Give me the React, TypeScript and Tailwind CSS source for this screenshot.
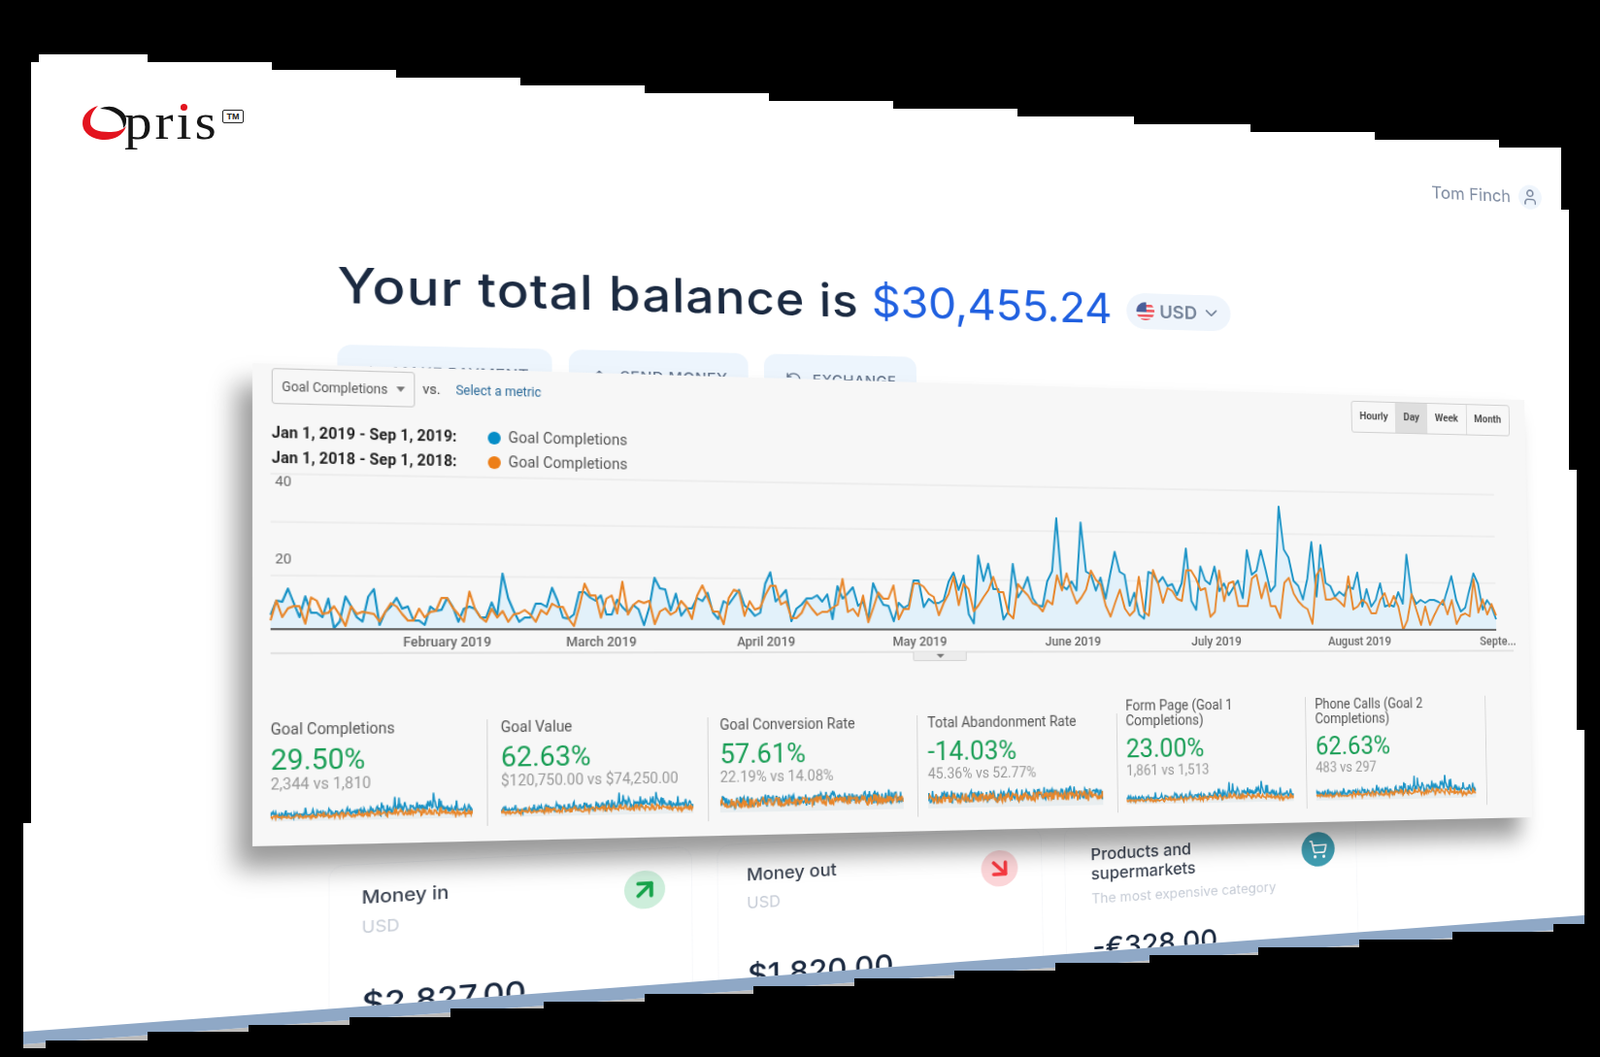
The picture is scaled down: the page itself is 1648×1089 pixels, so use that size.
import { ArrowDown, ArrowDownRight, ArrowUp, ArrowUpRight, ChevronDown, RefreshCcw, ShoppingCart, User } from "lucide-react";

type Point = [number, number];

// maps a w x h box on to four screen corners (tl, tr, br, bl)
function quadMatrix(w: number, h: number, [p0, p1, p2, p3]: Point[]) {
  const dx1 = p1[0] - p2[0];
  const dx2 = p3[0] - p2[0];
  const sx = p0[0] - p1[0] + p2[0] - p3[0];
  const dy1 = p1[1] - p2[1];
  const dy2 = p3[1] - p2[1];
  const sy = p0[1] - p1[1] + p2[1] - p3[1];
  const det = dx1 * dy2 - dx2 * dy1;
  const g = (sx * dy2 - dx2 * sy) / det;
  const k = (dx1 * sy - sx * dy1) / det;
  const a = p1[0] - p0[0] + g * p1[0];
  const b = p3[0] - p0[0] + k * p3[0];
  const d = p1[1] - p0[1] + g * p1[1];
  const e = p3[1] - p0[1] + k * p3[1];
  return `matrix3d(${a / w},${d / w},0,${g / w},${b / h},${e / h},0,${k / h},0,0,1,0,${p0[0]},${p0[1]},0,1)`;
}

const pageTransform = quadMatrix(1700, 1000, [[32, 56], [1608, 152], [1632, 943], [24, 1063]]);
const cardTransform = quadMatrix(1300, 440, [[260, 374], [1570, 412], [1578, 842], [260, 872]]);

const blue = [
  13, 26, 25, 37, 24, 11, 30, 15, 15, 11, 28, 1, 7, 30, 21, 11, 7, 30, 37, 4, 16, 21, 29, 19, 21, 8, 8, 4, 21, 17, 18, 29, 21, 7, 19, 21, 19, 11, 11,
  25, 13, 52, 29, 17, 7, 11, 11, 24, 24, 21, 39, 27, 11, 10, 14, 35, 35, 30, 27, 32, 14, 14, 28, 21, 16, 23, 19, 4, 21, 49, 39, 38, 18, 34, 13, 20,
  20, 30, 27, 35, 16, 10, 27, 24, 31, 38, 23, 19, 13, 16, 44, 55, 27, 32, 38, 8, 20, 24, 30, 30, 33, 27, 34, 10, 42, 30, 35, 41, 23, 27, 10, 45, 33,
  24, 23, 8, 26, 21, 24, 48, 48, 22, 30, 26, 26, 29, 47, 56, 39, 53, 15, 6, 73, 48, 65, 40, 40, 10, 18, 65, 32, 40, 52, 31, 24, 23, 48, 58, 111, 44,
  40, 48, 39, 107, 58, 55, 39, 52, 31, 55, 78, 58, 55, 24, 37, 15, 11, 58, 56, 47, 53, 44, 46, 35, 47, 82, 29, 20, 64, 50, 46, 64, 39, 47, 35, 43, 50,
  32, 81, 56, 60, 81, 61, 39, 45, 126, 82, 74, 50, 45, 31, 52, 90, 34, 87, 48, 45, 34, 39, 35, 45, 42, 59, 24, 42, 24, 31, 48, 24, 26, 24, 39, 27, 78,
  37, 27, 31, 28, 31, 31, 29, 26, 41, 56, 31, 19, 23, 41, 59, 48, 21, 31, 24, 11,
];

const orange = [
  8, 26, 11, 19, 21, 21, 5, 29, 26, 14, 15, 21, 13, 3, 21, 14, 16, 15, 14, 7, 16, 24, 21, 14, 8, 8, 19, 11, 16, 17, 29, 29, 20, 14, 7, 35, 19, 11, 7,
  19, 11, 17, 7, 14, 15, 18, 14, 7, 18, 14, 24, 21, 21, 10, 3, 21, 43, 32, 32, 11, 29, 32, 15, 45, 14, 23, 27, 25, 27, 5, 17, 20, 14, 17, 27, 21, 10,
  32, 42, 30, 17, 17, 5, 30, 38, 36, 13, 27, 19, 21, 33, 42, 42, 24, 27, 11, 11, 16, 27, 20, 14, 17, 17, 21, 24, 49, 17, 20, 13, 33, 7, 21, 36, 30, 30,
  43, 10, 20, 20, 45, 45, 42, 35, 32, 14, 26, 35, 52, 24, 45, 40, 18, 24, 32, 39, 52, 37, 37, 16, 11, 45, 39, 34, 26, 24, 18, 29, 25, 54, 39, 56, 39,
  26, 32, 40, 59, 50, 45, 24, 13, 27, 40, 21, 14, 19, 53, 18, 14, 60, 47, 27, 42, 39, 31, 29, 60, 60, 52, 40, 42, 13, 18, 60, 29, 47, 49, 24, 24, 24,
  52, 56, 32, 48, 24, 24, 12, 48, 53, 37, 29, 24, 21, 6, 56, 63, 31, 31, 33, 29, 24, 55, 21, 24, 31, 27, 17, 17, 31, 38, 24, 35, 24, 0, 10, 37, 21, 5,
  24, 5, 15, 24, 31, 16, 31, 6, 15, 17, 14, 53, 18, 32, 16, 27, 15,
];

const plotLeft = 16;
const plotWidth = 1246;
const axisY = 145;

function linePoints(series: number[]) {
  return series
    .map((v, i) => `${(plotLeft + (i * plotWidth) / (series.length - 1)).toFixed(1)},${axisY - v}`)
    .join(" ");
}

function rand(i: number, seed: number) {
  const n = Math.sin(i * 12.9898 + seed * 78.233) * 43758.5453;
  return n - Math.floor(n);
}

function sparkPoints(series: number[], scale: number, base: number, jitter: number, seed: number) {
  return series
    .map((v, i) => {
      const y = base - v * scale - jitter * (rand(i, seed) - 0.5);
      return `${((i * 182) / (series.length - 1)).toFixed(1)},${y.toFixed(1)}`;
    })
    .join(" ");
}

const monthLabels = [
  { label: "February 2019", day: 31 },
  { label: "March 2019", day: 59 },
  { label: "April 2019", day: 90 },
  { label: "May 2019", day: 120 },
  { label: "June 2019", day: 151 },
  { label: "July 2019", day: 181 },
  { label: "August 2019", day: 212 },
  { label: "Septe...", day: 243 },
];

const metrics = [
  { title: "Goal Completions", value: "29.50%", sub: "2,344 vs 1,810", box: "w-[208px] pl-[12px]", scale: 0.16, base: 21, jitter: 2, seed: 1 },
  { title: "Goal Value", value: "62.63%", sub: "$120,750.00 vs $74,250.00", box: "w-[209px] pl-[12px]", scale: 0.14, base: 20, jitter: 4, seed: 2 },
  { title: "Goal Conversion Rate", value: "57.61%", sub: "22.19% vs 14.08%", box: "w-[208px] pl-[11px]", scale: 0.06, base: 15, jitter: 11, seed: 3 },
  { title: "Total Abandonment Rate", value: "-14.03%", sub: "45.36% vs 52.77%", box: "w-[208px] pl-[10px]", scale: 0.04, base: 14, jitter: 12, seed: 4 },
  { title: "Form Page (Goal 1 Completions)", value: "23.00%", sub: "1,861 vs 1,513", box: "w-[206px] pl-[9px]", scale: 0.15, base: 21, jitter: 2, seed: 5 },
  { title: "Phone Calls (Goal 2 Completions)", value: "62.63%", sub: "483 vs 297", box: "w-[205px] pl-[10px]", scale: 0.17, base: 20, jitter: 3, seed: 6 },
];

function Logo() {
  return (
    <div className="absolute left-[83px] top-[106px] h-[56px] w-[172px]">
      <svg width="50" height="42" viewBox="0 0 50 42" className="absolute left-0 top-0">
        <path d="M18 3C8 6 2 13 2 21C2 31 12 38 25 38C35 38 44 33 47 24C42 29 36 30 29 30C18 30 10 27 10 20C10 12 14 7 18 3Z" fill="#e3141f" />
        <path d="M20 6C26 3 33 3 38 6C44 9 48 14 47 19C47 22 46 24 44 26C44 20 42 15 38 12C33 8 27 6 20 6Z" fill="#141414" />
      </svg>
      <span className="absolute left-[45px] top-[-12px] origin-left scale-x-[1.1] text-[52px] leading-[64px] tracking-[2.7px] text-[#161616] [font-family:'Liberation_Serif',serif]">
        pris
      </span>
      <span className="absolute left-[103px] top-[1px] h-[7px] w-[7px] rounded-full bg-[#e3141f]" />
      <span className="absolute left-[146px] top-[7px] flex h-[14px] w-[22px] items-center justify-center rounded-[2px] border-[1.5px] border-[#222] text-[9px] font-bold leading-none text-[#222] [font-family:'Liberation_Sans',sans-serif]">
        TM
      </span>
    </div>
  );
}

function UsFlag() {
  return (
    <svg width="22" height="22" viewBox="0 0 22 22">
      <clipPath id="flag-clip">
        <circle cx="11" cy="11" r="11" />
      </clipPath>
      <g clipPath="url(#flag-clip)">
        <rect width="22" height="22" fill="#f3f4f6" />
        <rect y="3" width="22" height="3" fill="#ef5a63" />
        <rect y="9" width="22" height="3" fill="#ef5a63" />
        <rect y="15" width="22" height="3" fill="#ef5a63" />
        <rect y="20" width="22" height="2" fill="#ef5a63" />
        <rect width="12" height="12" fill="#4a5f9a" />
      </g>
    </svg>
  );
}

function ActionButton({ label, icon, className }: { label: string; icon: React.ReactNode; className: string }) {
  return (
    <div className={`flex h-[58px] items-center justify-center gap-[12px] rounded-[14px] bg-[#edf5fd] text-[16px] font-medium uppercase tracking-[0.5px] text-[#64748b] ${className}`}>
      {icon}
      {label}
    </div>
  );
}

function SummaryCard({ icon, circle, children }: { icon: React.ReactNode; circle: string; children: React.ReactNode }) {
  return (
    <div className="flex h-[300px] w-[358px] items-start justify-between rounded-[14px] border border-[#f7f8fa] pl-[30px] pr-[27px] pt-[23px]">
      <div>{children}</div>
      <div className={`flex h-[42px] w-[42px] shrink-0 items-center justify-center rounded-full ${circle}`}>{icon}</div>
    </div>
  );
}

function PageContent() {
  return (
    <div
      className="absolute left-0 top-0 h-[1000px] w-[1700px] origin-top-left overflow-hidden blur-[0.6px] [font-family:Inter,sans-serif]"
      style={{ transform: pageTransform }}
    >
      <div className="flex items-center justify-end gap-[11px] pr-[30px] pt-[52px]">
        <span className="text-[22px] leading-[32px] text-[#7d8aa0]">Tom Finch</span>
        <div className="flex h-[32px] w-[32px] items-center justify-center rounded-full bg-[#eff5fc]">
          <User size={24} color="#7d8aa0" strokeWidth={2} />
        </div>
      </div>

      <div className="ml-[280px] mt-[117px] flex items-center leading-[60px] text-[#1b2a41]">
        <span className="text-[53px] font-medium tracking-[1.1px]">Your total balance is</span>
        <span className="ml-[14px] text-[51px] tracking-[-0.3px] text-[#2060e0]">$30,455.24</span>
        <div className="ml-[18px] mt-[3px] flex h-[44px] w-[128px] items-center justify-center gap-[6px] rounded-full bg-[#eff5fc]">
          <UsFlag />
          <span className="text-[22px] font-semibold leading-none text-[#76859a]">USD</span>
          <ChevronDown size={24} color="#76859a" />
        </div>
      </div>

      <div className="ml-[280px] mt-[34px] flex gap-[17px]">
        <ActionButton className="w-[210px]" label="Make payment" icon={<ArrowDown size={18} />} />
        <ActionButton className="w-[187px]" label="Send money" icon={<ArrowUp size={18} />} />
        <ActionButton className="w-[168px]" label="Exchange" icon={<RefreshCcw size={18} />} />
      </div>

      <div className="ml-[272px] mt-[497px] flex gap-[26px] text-[19px] font-medium leading-[23px] text-[#3c4452]">
        <SummaryCard circle="bg-[#cdeedb]" icon={<ArrowUpRight size={32} color="#16a34a" strokeWidth={3} />}>
          <p>Money in</p>
          <p className="mt-[10px] text-[17px] font-normal leading-[20px] text-[#c6ccd6]">USD</p>
          <p className="mt-[50px] text-[33px] leading-[40px] text-[#1b2a41]">$2,827.00</p>
        </SummaryCard>
        <SummaryCard circle="bg-[#fbd5d8]" icon={<ArrowDownRight size={32} color="#f5383f" strokeWidth={3} />}>
          <p>Money out</p>
          <p className="mt-[10px] text-[17px] font-normal leading-[20px] text-[#c6ccd6]">USD</p>
          <p className="mt-[50px] text-[33px] leading-[40px] text-[#1b2a41]">$1,820.00</p>
        </SummaryCard>
        <SummaryCard circle="bg-[#3f9db1]" icon={<ShoppingCart size={24} color="#ffffff" />}>
          <p>
            Products and
            <br />
            supermarkets
          </p>
          <p className="mt-[7px] text-[16px] font-normal leading-[20px] text-[#c6ccd6]">The most expensive category</p>
          <p className="mt-[28px] text-[33px] leading-[40px] text-[#1b2a41]">-€328.00</p>
        </SummaryCard>
      </div>
    </div>
  );
}

function ChartCard() {
  return (
    <div
      className="absolute left-0 top-0 flex h-[440px] w-[1300px] origin-top-left flex-col bg-[#f7f7f7] shadow-[-14px_20px_22px_rgba(0,0,0,0.4)] blur-[0.4px] [font-family:Roboto,sans-serif]"
      style={{ transform: cardTransform }}
    >
      <div className="flex items-start pl-[17px] pr-[18px] pt-[4px]">
        <div className="flex h-[33px] w-[129px] items-center justify-between rounded-[3px] border border-[#c9c9c9] pl-[8px] pr-[8px] text-[12px] text-[#555]">
          Goal Completions
          <span className="h-0 w-0 border-x-[4px] border-t-[5px] border-x-transparent border-t-[#777]" />
        </div>
        <span className="ml-[7px] mt-[6px] text-[13px] text-[#444]">vs.</span>
        <span className="ml-[14px] mt-[7px] text-[12px] text-[#2b6a99]">Select a metric</span>
        <div className="ml-auto mt-[2px] flex h-[33px] w-[183px] rounded-[3px] border border-[#d0d0d0] text-[11px] font-semibold text-[#444]">
          <span className="flex w-[50px] items-center justify-center">Hourly</span>
          <span className="flex w-[37px] items-center justify-center bg-[#dedede]">Day</span>
          <span className="flex w-[46px] items-center justify-center border-r border-[#d8d8d8]">Week</span>
          <span className="flex w-[50px] items-center justify-center">Month</span>
        </div>
      </div>

      <div className="ml-[17px] mt-[13px] leading-[23px]">
        {["Jan 1, 2019 - Sep 1, 2019:", "Jan 1, 2018 - Sep 1, 2018:"].map((range, i) => (
          <div key={range} className="flex items-center">
            <span className="w-[196px] text-[14px] font-bold tracking-[0.1px] text-[#222]">{range}</span>
            <span className={`h-[12px] w-[12px] rounded-full ${i === 0 ? "bg-[#058dc7]" : "bg-[#ed7e17]"}`} />
            <span className="ml-[7px] text-[14px] tracking-[0.1px] text-[#555]">Goal Completions</span>
          </div>
        ))}
      </div>

      <div className="relative h-[170px]">
        <svg width="1300" height="170" viewBox="0 0 1300 170" className="absolute left-0 top-0">
          <path d="M16 3H1262M16 47H1262M16 96H1262" stroke="#e4e4e4" strokeWidth="1" />
          <polygon points={`${plotLeft},${axisY} ${linePoints(blue)} ${plotLeft + plotWidth},${axisY}`} fill="#e2f1fa" />
          <polyline points={linePoints(blue)} fill="none" stroke="#1a93c6" strokeWidth="2" strokeLinejoin="round" />
          <polyline points={linePoints(orange)} fill="none" stroke="#e8862a" strokeWidth="2" strokeLinejoin="round" />
          <path d="M16 145H1262" stroke="#666" strokeWidth="2" />
          <path d="M16 167H1282" stroke="#dcdcdc" strokeWidth="1.5" />
        </svg>
        <span className="absolute left-[20px] top-[2px] text-[13px] leading-[16px] text-[#666]">40</span>
        <span className="absolute left-[20px] top-[73px] text-[13px] leading-[16px] text-[#666]">20</span>
        {monthLabels.map((m) => (
          <span
            key={m.label}
            className="absolute top-[149px] -translate-x-1/2 whitespace-nowrap text-[12.5px] font-medium leading-[16px] text-[#666]"
            style={{ left: plotLeft + m.day * 5.135 }}
          >
            {m.label}
          </span>
        ))}
        <div className="absolute left-[625px] top-[167px] flex h-[9px] w-[55px] items-center justify-center rounded-b-[2px] border border-t-0 border-[#d4d4d4] bg-[#ececec]">
          <span className="h-0 w-0 border-x-[4px] border-t-[4px] border-x-transparent border-t-[#777]" />
        </div>
      </div>

      <div className="ml-[4px] mt-auto flex items-end pb-[14px]">
        {metrics.map((m) => (
          <div key={m.value + m.title} className={`flex flex-col border-r border-[#d6d6d6] pb-[8px] ${m.box}`}>
            <p className="w-[170px] text-[14px] leading-[15px] text-[#555]">{m.title}</p>
            <p className="mt-[6px] text-[26px] leading-[28px] text-[#1a9e56]">{m.value}</p>
            <p className="text-[14px] leading-[17px] text-[#999]">{m.sub}</p>
            <svg width="182" height="24" viewBox="0 0 182 24" className="mt-[1px]">
              <polygon points={`0,24 ${sparkPoints(blue, m.scale, m.base, m.jitter, m.seed)} 182,24`} fill="#e9eef0" />
              <polyline points={sparkPoints(blue, m.scale, m.base, m.jitter, m.seed)} fill="none" stroke="#1a93c6" strokeWidth="1.5" />
              <polyline points={sparkPoints(orange, m.scale * 0.7, m.base + 1, m.jitter * 0.8, m.seed + 10)} fill="none" stroke="#e8862a" strokeWidth="1.5" />
            </svg>
          </div>
        ))}
      </div>
    </div>
  );
}

export default function App() {
  return (
    <div className="relative h-[1089px] w-[1648px] overflow-hidden bg-black">
      <div className="absolute inset-0 bg-white [clip-path:polygon(40px_56px,152px_56px,152px_64px,280px_64px,280px_72px,408px_72px,408px_80px,536px_80px,536px_88px,664px_88px,664px_96px,792px_96px,792px_104px,920px_104px,920px_112px,1048px_112px,1048px_120px,1168px_120px,1168px_128px,1288px_128px,1288px_136px,1416px_136px,1416px_144px,1544px_144px,1544px_152px,1608px_152px,1608px_216px,1616px_216px,1616px_484px,1624px_484px,1624px_752px,1632px_752px,1632px_952px,1600px_952px,1600px_960px,1496px_960px,1496px_968px,1400px_968px,1400px_976px,1296px_976px,1296px_984px,1184px_984px,1184px_992px,1087px_992px,1087px_1000px,983px_1000px,983px_1008px,880px_1008px,880px_1016px,776px_1016px,776px_1024px,664px_1024px,664px_1032px,560px_1032px,560px_1039px,464px_1039px,464px_1048px,360px_1048px,360px_1056px,256px_1056px,256px_1063px,152px_1063px,152px_1072px,47px_1072px,47px_1080px,24px_1080px,24px_848px,32px_848px,32px_64px,40px_64px)]">
        <Logo />
        <PageContent />
        <div className="absolute inset-0 bg-[#bdbcbb] [clip-path:polygon(24px_1076px,1632px_956px,1632px_1089px,24px_1089px)]" />
        <div className="absolute inset-0 bg-[#8fa8c6] [clip-path:polygon(24px_1063px,1632px_943px,1632px_956px,24px_1076px)]" />
        <ChartCard />
      </div>
    </div>
  );
}
